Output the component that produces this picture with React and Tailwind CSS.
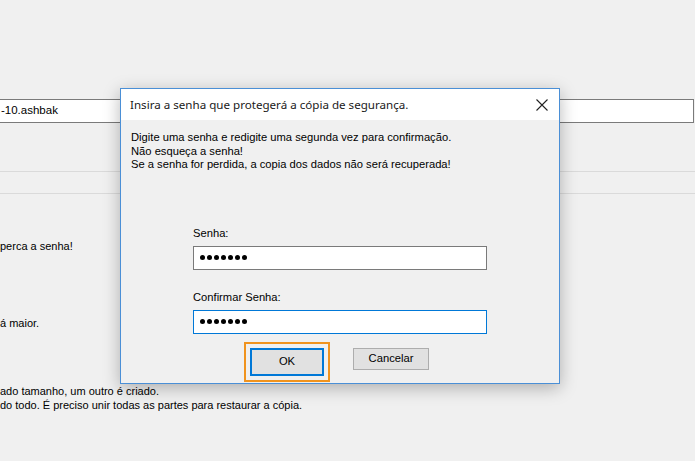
import React from "react";

function Dots() {
  return (
    <div className="flex items-center gap-[2px]">
      {[0, 1, 2, 3, 4, 5, 6].map((i) => (
        <span key={i} className="block w-[5px] h-[5px] rounded-full bg-black" />
      ))}
    </div>
  );
}

export default function App() {
  const sans = { fontFamily: '"Liberation Sans", Arial, sans-serif' };
  return (
    <div className="relative w-[695px] h-[461px] bg-[#f0f0f0] overflow-hidden text-[11px] text-black" style={sans}>
      {/* background page */}
      <div className="flex flex-col">
        <div className="h-[99px]" />
        <div className="h-[24px] bg-white border-y border-r border-[#7a7a7a] w-[694px] flex items-center">
          <span className="pl-[1px] text-[11.5px]">-10.ashbak</span>
        </div>
        <div className="h-[48px]" />
        <div className="h-px bg-[#dadada]" />
        <div className="h-[21px]" />
        <div className="h-px bg-[#dadada]" />
        <div className="h-[45px]" />
        <div className="leading-[14px]">perca a senha!</div>
        <div className="h-[63px]" />
        <div className="leading-[14px]">á maior.</div>
        <div className="h-[54px]" />
        <div className="leading-[14px]">ado tamanho, um outro é criado.</div>
        <div className="leading-[14px]">do todo. É preciso unir todas as partes para restaurar a cópia.</div>
      </div>

      {/* dialog */}
      <div className="absolute left-[120px] top-[88px] w-[440px] h-[296px] border border-[#4a8fd6] bg-[#f0f0f0] shadow-[0_4px_16px_rgba(0,0,0,0.28)] flex flex-col">
        <div className="h-[31px] bg-white flex items-center justify-between pl-[9px] pr-[10px]">
          <span className="text-[11.6px] text-[#1a1a1a]" style={{ fontFamily: '"Noto Sans", "Open Sans", sans-serif' }}>
            Insira a senha que protegerá a cópia de segurança.
          </span>
          <svg width="12" height="12" viewBox="0 0 12 12" className="mr-[1px]">
            <path d="M0.5 0.5 L11.5 11.5 M11.5 0.5 L0.5 11.5" stroke="#222" strokeWidth="1.1" fill="none" />
          </svg>
        </div>
        <div className="pl-[10px] pt-[11px] leading-[13.5px] text-[11.2px]">
          <div>Digite uma senha e redigite uma segunda vez para confirmação.</div>
          <div>Não esqueça a senha!</div>
          <div>Se a senha for perdida, a copia dos dados não será recuperada!</div>
        </div>
        <div className="pl-[72px] pt-[54px] flex flex-col text-[11.2px]">
          <div className="leading-[14px]">Senha:</div>
          <div className="mt-[6px] w-[294px] h-[24px] bg-white border border-[#7a7a7a] flex items-center pl-[6px]">
            <Dots />
          </div>
          <div className="mt-[20px] leading-[14px]">Confirmar Senha:</div>
          <div className="mt-[6px] w-[294px] h-[24px] bg-white border border-[#0078d7] flex items-center pl-[6px]">
            <Dots />
          </div>
        </div>
        <div className="flex pl-[123px] pt-[8px] gap-[23px] items-start text-[11.2px]">
          <div className="border-2 border-[#f0931e] p-[4px] w-[86px] h-[40px]">
            <div className="w-full h-full border border-[#0078d7] bg-[#e1e1e1] flex items-center justify-center">
              <div className="w-full h-full border border-[#0078d7] flex items-center justify-center">OK</div>
            </div>
          </div>
          <div className="mt-[6px] w-[76px] h-[22px] border border-[#adadad] bg-[#e1e1e1] flex items-center justify-center">
            Cancelar
          </div>
        </div>
      </div>
    </div>
  );
}
